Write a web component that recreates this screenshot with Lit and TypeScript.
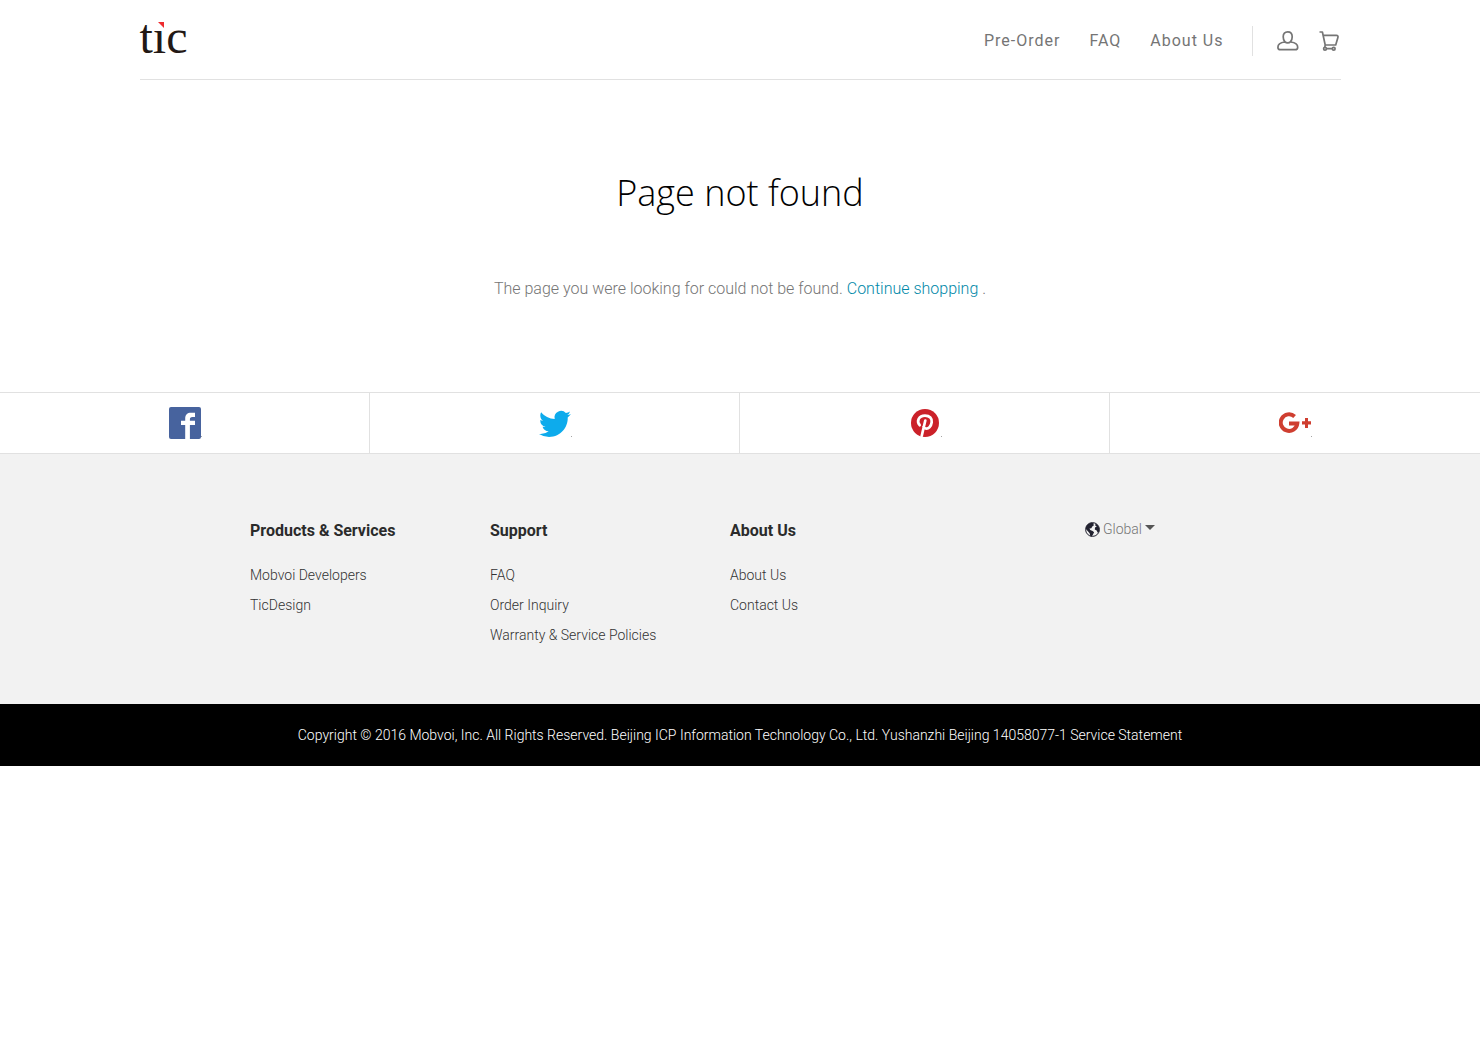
import { LitElement, html, css, svg } from "lit";
import { customElement } from "lit/decorators.js";

const userIcon = svg`<svg class="icon" viewBox="0 0 22 22" width="22" height="22" aria-hidden="true"><path d="M7.800 11.600C6.600 10.300 6.200 8.600 6.200 6.700 6.200 3.500 7.900 1.800 10.700 1.800s4.500 1.700 4.500 4.900c0 1.900-.4 3.600-1.600 4.900-1.600 1.700-4.200 1.700-5.800 0zM7.800 12C3.400 12.600.9 14.300.9 17.200c0 1.800.9 2.500 2.500 2.500h14.800c1.600 0 2.500-.7 2.500-2.500 0-2.900-2.600-4.600-7-5.200"/></svg>`;

const cartIcon = svg`<svg class="icon" viewBox="0 0 22 22" width="22" height="22" aria-hidden="true"><path d="M.5 2h2.900l2.800 13h10.500L18.900 7.400c.4-1.300-.1-2-1.500-2H4.200M6.200 15l-.4 2M7.500 18.700h6"/><circle cx="6" cy="18.700" r="1.400"/><circle cx="14.700" cy="18.700" r="1.400"/></svg>`;

const facebook = svg`<svg viewBox="0 0 32 32" width="32" height="32" aria-hidden="true"><rect width="32" height="32" rx="2" fill="#47639e"/><path fill="#fff" d="M16.200 32V18H12v-4.200h4.200v-2.300c0-3.700 2.200-5.700 5.700-5.700H26v4.300h-2.600c-2 0-2.500.9-2.500 2.300v1.400H26V18h-5.100v14z"/></svg>`;

const twitter = svg`<svg viewBox="0 -.7 24 24" width="32" height="32" aria-hidden="true"><path fill="#0dabec" d="M23.950 4.570a10 10 0 0 1-2.820.770 4.960 4.960 0 0 0 2.160-2.720c-.95.550-2 .950-3.130 1.180a4.920 4.920 0 0 0-8.380 4.480C7.690 8.090 4.070 6.130 1.640 3.160a4.820 4.820 0 0 0-.67 2.480c0 1.710.87 3.210 2.190 4.100a4.900 4.900 0 0 1-2.230-.62v.060a4.920 4.920 0 0 0 3.950 4.830 5 5 0 0 1-2.210.080 4.940 4.940 0 0 0 4.600 3.420A9.870 9.870 0 0 1 0 19.540a13.990 13.990 0 0 0 7.550 2.210c9.050 0 14-7.500 14-13.980 0-.210 0-.420-.020-.630a9.940 9.940 0 0 0 2.420-2.570z"/></svg>`;

const pinterest = svg`<svg viewBox="0 0 32 32" width="32" height="32" aria-hidden="true"><circle cx="16" cy="16" r="14" fill="#cb2129"/><path fill="none" stroke="#fff" stroke-width="2.700" stroke-linecap="round" d="M10.700 18.200C7.200 14 9.800 8.600 16 8.600c4.800 0 7.200 2.900 6.700 6.700-.5 4.300-3.400 6.800-6 6.200-1.300-.3-2-1-2.200-1.800M16.300 13.500L12.700 29"/></svg>`;

const googlePlus = svg`<svg viewBox="0 0 32 32" width="32" height="32" aria-hidden="true"><path fill="none" stroke="#cf3e30" stroke-width="4" d="M15.600 9.400A8.300 8.300 0 1 0 18.300 16.500H10"/><path fill="#cf3e30" d="M26 11h3v3.200h3v3.200h-3V21h-3v-3.600h-3v-3.200h3z"/></svg>`;

const globe = svg`<svg viewBox="0 0 15 15" width="15" height="15" aria-hidden="true"><circle cx="7.500" cy="7.500" r="6.900" fill="#f2f2f2" stroke="#222230" stroke-width="1"/><path fill="#222230" d="M1 5C2 2.500 4 .9 6.500.7l2.300.4-.6 1.200 1 .6-1.900 1.600-1 1.700-1.800.4.7 1.400 2.400.9 1.500 1.300-1 2-1.200 2.200-1.500-.2-.8-3-1.900-2.300L1 7.200zM10.500 1.300l2.200 1.800L14.200 6v3.600l-1.500 1.200-1-2.400-1.900-.8.2-2.200 1.800-1-1.600-1z"/></svg>`;

const navigation = ["Pre-Order", "FAQ", "About Us"];

const networks = [
  { name: "Facebook", icon: facebook },
  { name: "Twitter", icon: twitter },
  { name: "Pinterest", icon: pinterest },
  { name: "Google Plus", icon: googlePlus },
];

const columns = [
  { title: "Products & Services", links: ["Mobvoi Developers", "TicDesign"] },
  { title: "Support", links: ["FAQ", "Order Inquiry", "Warranty & Service Policies"] },
  { title: "About Us", links: ["About Us", "Contact Us"] },
];

@customElement("site-header")
class SiteHeader extends LitElement {
  static styles = css`
    :host { display: block; padding: 0 20px; }
    .bar {
      display: flex; align-items: flex-start; justify-content: space-between;
      box-sizing: border-box; max-width: 1201px; height: 80px; margin: 0 auto;
      padding-top: 13px; border-bottom: 1px solid #e1e1e1;
    }
    .logo {
      position: relative; color: #231815; text-decoration: none;
      font: 48px/48px "Liberation Serif", serif;
    }
    .mark { position: absolute; left: 18px; top: 9px; }
    .nav { display: flex; align-items: center; padding-top: 13px; }
    .links { display: flex; gap: 29px; padding-right: 28px; }
    .link {
      color: #757575; text-decoration: none; letter-spacing: 1px;
      font-size: 16px; line-height: 30px;
    }
    .tools {
      display: flex; align-items: center; gap: 20px; height: 30px;
      padding-left: 24px; border-left: 1px solid #e1e1e1;
    }
    .tool { display: flex; color: #757575; }
    .icon { fill: none; stroke: currentColor; stroke-width: 1.7; stroke-linejoin: round; }
  `;

  render() {
    return html`<header class="bar">
      <a class="logo" href="#" aria-label="tic">tıc<svg class="mark" width="6" height="6" viewBox="0 0 6 6" aria-hidden="true"><path fill="#ee2b2f" d="M0 0h6v6z"/></svg></a>
      <nav class="nav">
        <div class="links">${navigation.map((item) => html`<a class="link" href="#">${item}</a>`)}</div>
        <div class="tools">
          <a class="tool" href="#" aria-label="Account">${userIcon}</a>
          <a class="tool" href="#" aria-label="Cart">${cartIcon}</a>
        </div>
      </nav>
    </header>`;
  }
}

@customElement("social-links")
class SocialLinks extends LitElement {
  static styles = css`
    :host { display: block; border: solid #e1e1e1; border-width: 1px 0; }
    .row { display: grid; grid-template-columns: repeat(4, 1fr); }
    .cell {
      display: flex; align-items: center; justify-content: center;
      box-sizing: border-box; height: 60px; border-right: 1px solid #e1e1e1;
    }
    .cell:last-child { border-right-color: transparent; }
    .badge { position: relative; display: flex; }
    .badge::after {
      content: ""; position: absolute; right: -1px; bottom: 2px;
      width: 1px; height: 1px; background: #a5a5a5;
    }
  `;

  render() {
    return html`<nav class="row">
      ${networks.map((n) => html`<a class="cell" href="#" aria-label=${n.name}><span class="badge">${n.icon}</span></a>`)}
    </nav>`;
  }
}

@customElement("site-footer")
class SiteFooter extends LitElement {
  static styles = css`
    :host { display: block; }
    .panel { background: #f2f2f2; padding: 64px 20px 54px; }
    .inner { display: flex; gap: 40px; max-width: 980px; margin: 0 auto; }
    .column { flex: 0 1 200px; }
    .title { margin: 0; color: #2b2b2b; font-size: 16px; font-weight: 700; line-height: 26px; }
    .list { list-style: none; margin: 16px 0 0; padding: 0; }
    .item { line-height: 30px; font-size: 14px; white-space: nowrap; }
    .link { color: #333; text-decoration: none; }
    .region { flex: 0 1 220px; display: flex; justify-content: center; align-items: flex-start; margin-left: auto; }
    .picker {
      display: flex; align-items: center; gap: 3px; padding: 0; border: 0; background: none;
      color: #757575; font: 300 14px/22px Roboto, sans-serif; cursor: pointer;
    }
    .caret { margin-bottom: 3px; border: 5px solid transparent; border-top-color: #555; border-bottom: 0; }
    .legal {
      margin: 0; padding: 20px; background: #000; color: #fff; text-align: center;
      font-size: 14px; line-height: 22px;
    }
  `;

  render() {
    return html`<footer>
      <div class="panel"><div class="inner">
        ${columns.map((c) => html`<section class="column">
          <h2 class="title">${c.title}</h2>
          <ul class="list">${c.links.map((l) => html`<li class="item"><a class="link" href="#">${l}</a></li>`)}</ul>
        </section>`)}
        <div class="region"><button class="picker" type="button">${globe}<span>Global</span><span class="caret"></span></button></div>
      </div></div>
      <p class="legal">Copyright © 2016 Mobvoi, Inc. All Rights Reserved. Beijing ICP Information Technology Co., Ltd. Yushanzhi Beijing 14058077-1 Service Statement</p>
    </footer>`;
  }
}

@customElement("app-root")
class AppRoot extends LitElement {
  static styles = css`
    :host { display: block; background: #fff; font-family: Roboto, sans-serif; font-weight: 300; }
    site-header { font-weight: 400; }
    .content { padding: 85px 20px 91px; text-align: center; }
    .heading {
      margin: 0; color: #000; font-family: "Open Sans", sans-serif;
      font-size: 36px; font-weight: 300; line-height: 56px;
    }
    .message { margin: 56px 0 0; color: #757575; font-size: 16px; line-height: 24px; }
    .shop { color: #0088a8; text-decoration: none; }
  `;

  render() {
    return html`
      <site-header></site-header>
      <main class="content">
        <h1 class="heading">Page not found</h1>
        <p class="message">The page you were looking for could not be found. <a class="shop" href="#">Continue shopping</a> .</p>
      </main>
      <social-links></social-links>
      <site-footer></site-footer>
    `;
  }
}
